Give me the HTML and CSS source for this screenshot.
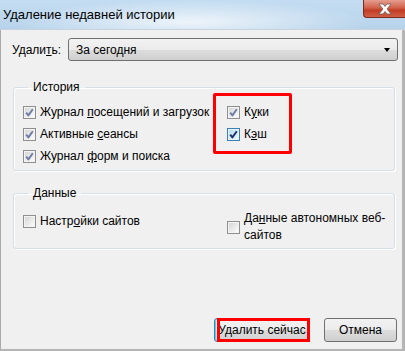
FILE: index.html
```html
<!DOCTYPE html>
<html>

<head lang="ru">
    <meta charset="UTF-8">
    <title>Удаление недавней истории</title>
    <link rel="stylesheet" href="styles.css">
</head>

<body>
    <svg width="0" height="0" class="defs">
        <defs>
            <linearGradient id="cb_fill" x1="0" y1="0" x2="1" y2="1">
                <stop offset="0" stop-color="#d6d6d6"/>
                <stop offset="1" stop-color="#fbfbfb"/>
            </linearGradient>
            <linearGradient id="cb_fill_hot" x1="0" y1="0" x2="1" y2="1">
                <stop offset="0" stop-color="#b9ddf2"/>
                <stop offset="1" stop-color="#e9f6fd"/>
            </linearGradient>
            <symbol id="box" viewBox="0 0 13 13">
                <rect x="0.5" y="0.5" width="12" height="12" fill="#f4f4f4" stroke="#8e8f8f"/>
                <rect x="2" y="2" width="9" height="9" fill="url(#cb_fill)"/>
            </symbol>
            <symbol id="box_hot" viewBox="0 0 13 13">
                <rect x="0.5" y="0.5" width="12" height="12" fill="#e5f4fc" stroke="#3c7fb1"/>
                <rect x="2" y="2" width="9" height="9" fill="url(#cb_fill_hot)"/>
            </symbol>
            <symbol id="tick" viewBox="0 0 13 13">
                <path d="M3.2 6.6 L5.4 9.4 L9.8 3.2" fill="none" stroke-width="1.9" stroke-linejoin="round"/>
            </symbol>
        </defs>
    </svg>

    <div class="window">
        <div class="titlebar">
            <span class="title">Удаление недавней истории</span>
            <div class="close">
                <svg width="20" height="12" viewBox="0 0 20 12">
                    <path d="M4 1 H8 L10 3.5 L12 1 H16 L12 6 L16 11 H12 L10 8.5 L8 11 H4 L8 6 Z" fill="#ffffff" stroke="#6b5f5f" stroke-width="0.8" stroke-linejoin="round"/>
                </svg>
            </div>
        </div>

        <div class="client">
            <div class="range_row">
                <span class="range_label">Удали<u>т</u>ь:</span>
                <div class="select">
                    <span>За сегодня</span>
                    <span class="arrow"></span>
                </div>
            </div>

            <fieldset class="group">
                <legend>История</legend>
                <div class="history_grid">
                    <div class="col_left">
                        <label class="check">
                            <svg class="cb"><use href="#box"/><use href="#tick" class="tick_grey"/></svg>
                            <span>Журнал <u>п</u>осещений и загрузок</span>
                        </label>
                        <label class="check">
                            <svg class="cb"><use href="#box"/><use href="#tick" class="tick_grey"/></svg>
                            <span>Активные <u>с</u>еансы</span>
                        </label>
                        <label class="check">
                            <svg class="cb"><use href="#box"/><use href="#tick" class="tick_grey"/></svg>
                            <span>Журнал <u>ф</u>орм и поиска</span>
                        </label>
                    </div>
                    <div class="col_right marked">
                        <label class="check">
                            <svg class="cb"><use href="#box"/><use href="#tick" class="tick_grey"/></svg>
                            <span>К<u>у</u>ки</span>
                        </label>
                        <label class="check">
                            <svg class="cb"><use href="#box_hot"/><use href="#tick" class="tick_dark"/></svg>
                            <span>К<u>э</u>ш</span>
                        </label>
                    </div>
                </div>
            </fieldset>

            <fieldset class="group group_data">
                <legend>Данные</legend>
                <div class="data_grid">
                    <label class="check">
                        <svg class="cb"><use href="#box"/></svg>
                        <span>Настр<u>о</u>йки сайтов</span>
                    </label>
                    <label class="check check_wrap">
                        <svg class="cb"><use href="#box"/></svg>
                        <span class="nowrap">Да<u>н</u>ные автономных веб-<br>сайтов</span>
                    </label>
                </div>
            </fieldset>

            <div class="buttons">
                <div class="btn btn_default marked_btn">Удалить сейчас</div>
                <div class="btn btn_cancel">Отмена</div>
            </div>
        </div>
    </div>
</body>

</html>
```

FILE: styles.css
```css
* {
    margin: 0;
    padding: 0;
    box-sizing: border-box;
}

body {
    width: 405px;
    height: 351px;
    overflow: hidden;
    font-family: "Liberation Sans", "Noto Sans CJK SC", sans-serif;
    font-size: 12px;
    color: #000;
    background: #f0f0f0;
}

.defs {
    position: absolute;
}

.window {
    width: 405px;
    height: 351px;
    display: flex;
    flex-direction: column;
}

.titlebar {
    height: 30px;
    display: flex;
    align-items: flex-start;
    background:
        radial-gradient(ellipse 180px 22px at 190px 22px, rgba(255, 255, 255, .75), rgba(255, 255, 255, 0)),
        linear-gradient(#c3dcf1, #b7d3eb);
    border-bottom: 1px solid #c7d3de;
}

.title {
    padding: 7px 0 0 3px;
    line-height: 15px;
    font-size: 13px;
}

.close {
    margin-left: auto;
    width: 42px;
    height: 18px;
    display: flex;
    align-items: center;
    justify-content: center;
    background: linear-gradient(#e69d8f, #d2634d 45%, #c13c23 60%, #d25d45);
    border: 1px solid #7b2a1e;
    border-top: none;
    border-right: none;
    border-radius: 0 0 0 4px;
}

.client {
    flex: 1;
    display: flex;
    flex-direction: column;
    border-left: 1px solid #ababab;
    border-right: 3px solid #b5b5b5;
    border-bottom: 2px solid #b5b5b5;
}

.range_row {
    display: flex;
    align-items: center;
    margin: 8px 4px 0 11px;
    height: 23px;
}

.range_label {
    width: 56px;
}

.select {
    flex: 1;
    height: 23px;
    display: flex;
    align-items: center;
    padding: 0 7px;
    border: 1px solid #707070;
    border-radius: 3px;
    background: linear-gradient(#f2f2f2, #ebebeb 50%, #dddddd 51%, #cfcfcf);
}

.arrow {
    margin-left: auto;
    width: 0;
    height: 0;
    border-style: solid;
    border-width: 4px 3.5px 0 3.5px;
    border-color: #000 transparent;
}

.group {
    margin: 19px 7px 0 12px;
    padding: 7px 9px 3px 9px;
    border: 1px solid #d5dfe5;
    border-radius: 3px;
    box-shadow: inset 1px 1px #fff, 1px 1px #fff;
}

.group legend {
    margin-left: 5px;
    padding: 0 5px;
    line-height: 14px;
}

.history_grid,
.data_grid {
    display: grid;
    grid-template-columns: 204px 1fr;
}

.check {
    height: 22px;
    display: flex;
    align-items: center;
    gap: 4px;
}

.cb {
    width: 13px;
    height: 13px;
    flex: none;
}

.tick_grey {
    stroke: #6c7ca6;
}

.tick_dark {
    stroke: #1f2f73;
}

.marked {
    position: relative;
}

.marked::after {
    content: "";
    position: absolute;
    left: -14px;
    top: -8px;
    width: 73px;
    height: 55px;
    border: 3px solid #ff0000;
    border-radius: 2px;
}

.group_data {
    margin-top: 15px;
    padding-top: 10px;
    padding-bottom: 4px;
}

.check_wrap {
    height: 34px;
    line-height: 17px;
}

.nowrap {
    white-space: nowrap;
}

.buttons {
    margin: auto 5px 7px 0;
    display: flex;
    justify-content: flex-end;
    gap: 14px;
}

.btn {
    height: 24px;
    display: flex;
    align-items: center;
    justify-content: center;
    border: 1px solid #707070;
    border-radius: 3px;
    background: linear-gradient(#f2f2f2, #ebebeb 50%, #dddddd 51%, #cfcfcf);
}

.btn_default {
    width: 96px;
    border-color: #3c7fb1;
    box-shadow: inset 0 0 0 1px #48d6fb;
    position: relative;
}

.marked_btn::after {
    content: "";
    position: absolute;
    left: 2px;
    top: -1px;
    right: -1px;
    bottom: -1px;
    border: 3px solid #ff0000;
}

.btn_cancel {
    width: 73px;
}
```
